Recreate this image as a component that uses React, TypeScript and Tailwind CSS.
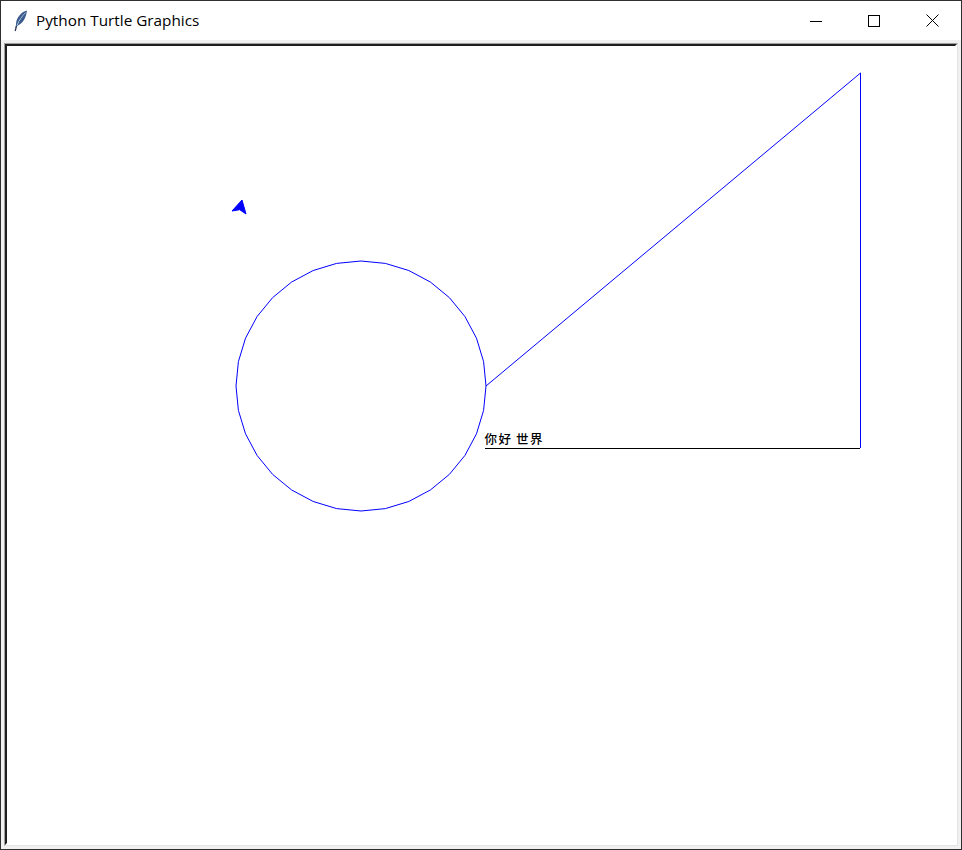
import React from "react";

// turtle circle: 32-gon, radius 125, centre (361, 386)
function circlePoints(cx: number, cy: number, r: number, steps: number) {
  const pts: string[] = [];
  for (let i = 0; i <= steps; i++) {
    const a = (i * 2 * Math.PI) / steps;
    pts.push(`${(cx + r * Math.cos(a)).toFixed(2)},${(cy - r * Math.sin(a)).toFixed(2)}`);
  }
  return pts.join(" ");
}

function Feather() {
  return (
    <svg width="14" height="22" viewBox="0 0 14 22">
      <path d="M13 0.5 C 7 2, 2.5 7.5, 2 14 L 1.8 18 L 3.8 15.5 C 9 13, 12 8, 13 0.5 Z" fill="#3b5b8c" />
      <path d="M11.8 2.5 C 8 6, 5.2 10, 3 15.5" stroke="#a9c1e0" strokeWidth="1" fill="none" />
      <path d="M2.4 16 L 1.2 21" stroke="#2a3a55" strokeWidth="1.3" fill="none" />
    </svg>
  );
}

function TitleBar() {
  return (
    <div className="h-[39px] bg-white flex items-center shrink-0">
      <div className="w-[35px] flex justify-center pl-[4px]">
        <Feather />
      </div>
      <span className="text-[15.3px] text-black pb-[1px]" style={{ fontFamily: '"Segoe UI", "Open Sans", sans-serif' }}>
        Python Turtle Graphics
      </span>
      <div className="ml-auto flex h-full">
        <div className="w-[58px] flex items-center justify-center">
          <svg width="12" height="12" viewBox="0 0 12 12">
            <line x1="0" y1="6.5" x2="12" y2="6.5" stroke="#000" strokeWidth="1" />
          </svg>
        </div>
        <div className="w-[58px] flex items-center justify-center">
          <svg width="12" height="12" viewBox="0 0 12 12">
            <rect x="0.5" y="0.5" width="11" height="11" stroke="#000" strokeWidth="1" fill="none" />
          </svg>
        </div>
        <div className="w-[58px] flex items-center justify-center">
          <svg width="13" height="13" viewBox="0 0 13 13">
            <path d="M0.5 0.5 L12.5 12.5 M12.5 0.5 L0.5 12.5" stroke="#000" strokeWidth="1" />
          </svg>
        </div>
      </div>
    </div>
  );
}

function TurtleCanvas() {
  const cjk = { fontFamily: '"Noto Sans CJK SC", sans-serif', letterSpacing: "1.5px" };
  return (
    <svg width="948" height="798" viewBox="7 46 948 798" className="block">
      <polyline points={circlePoints(361, 386, 125, 32)} fill="none" stroke="#0000ff" strokeWidth="1" />
      <polyline points="486,386 860.5,73 860.5,448" fill="none" stroke="#0000ff" strokeWidth="1" />
      <line x1="485" y1="448.5" x2="860" y2="448.5" stroke="#000" strokeWidth="1" />
      <text y="444" fontSize="12.5" fontWeight="500" fill="#000" style={cjk}>
        <tspan x="484.5">你好</tspan>
        <tspan x="516">世界</tspan>
      </text>
      <polygon points="242,200 232,211 239.7,209.7 246,214" fill="#0000ff" stroke="#0000ff" strokeWidth="1" />
    </svg>
  );
}

export default function App() {
  return (
    <div className="w-[962px] h-[850px] border border-[#2f2f2f] flex flex-col bg-[#f0f0f0]">
      <TitleBar />
      <div className="flex-1 pl-[3px] pt-[3px] pr-[3px] pb-[3px] min-h-0">
        <div className="h-full border border-l-[#a0a0a0] border-t-[#a0a0a0] border-r-[#e3e3e3] border-b-[#e3e3e3]">
          <div className="h-full border-2 border-l-[#1e1e1e] border-t-[#1e1e1e] border-r-white border-b-white bg-white overflow-hidden">
            <TurtleCanvas />
          </div>
        </div>
      </div>
    </div>
  );
}
